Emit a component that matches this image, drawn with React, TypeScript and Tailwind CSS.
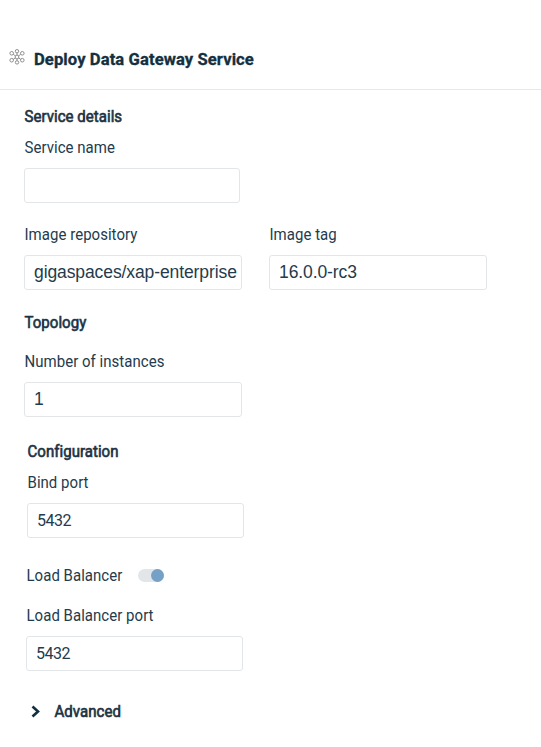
import type { ReactNode } from 'react';

const Heading = ({ children, className = '' }: { children: ReactNode; className?: string }) => (
  <h2 className={`h-5 origin-center scale-y-[1.08] pl-[0.5px] text-[15px] leading-[22px] font-normal tracking-[0.04px] whitespace-nowrap text-[#1b3344] [-webkit-text-stroke:0.6px_#1b3344] ${className}`}>
    {children}
  </h2>
);

type FieldProps = { label: string; value: string; box: string; text?: string; className?: string };

const Field = ({ label, value, box, text = '', className = '' }: FieldProps) => (
  <label className={`block ${className}`}>
    <span className="block h-5 scale-y-[1.08] pl-[0.5px] text-[15px] leading-[21px] tracking-[0.03px] whitespace-nowrap">{label}</span>
    <input
      defaultValue={value}
      className={`mt-2.5 block h-[35px] rounded-[3px] border border-[#e3e6e9] bg-white pl-[9px] outline-none ${box} ${text}`}
    />
  </label>
);

const ARIAL = "font-['Liberation_Sans',sans-serif] text-[17.5px] tracking-[-0.1px]";
const ROBOTO = 'text-[16px] tracking-[-0.5px]';

const HubIcon = () => (
  <svg width="16" height="16" viewBox="0 0 16 16" fill="none" stroke="#777777" strokeWidth="0.8">
    <circle cx="8" cy="8" r="1.9" />
    <circle cx="8" cy="2.2" r="1.7" />
    <circle cx="8" cy="13.4" r="1.7" />
    <circle cx="2.7" cy="4.3" r="1.8" />
    <circle cx="13.3" cy="4.3" r="1.8" />
    <circle cx="2.7" cy="11.2" r="1.8" />
    <circle cx="13.3" cy="11.2" r="1.8" />
    <path d="M8 3.9v2.2M8 9.9v1.8M4.3 5.3l2.1 1.6M11.7 5.3L9.6 6.9M4.3 10.3L6.4 8.9M11.7 10.3L9.6 8.9" />
  </svg>
);

export default function App() {
  return (
    <main className="h-[747px] w-[541px] overflow-hidden bg-white font-['Roboto',sans-serif] text-[#243b4d]">
      <header className="flex h-[90px] items-start border-b border-[#e6e8e9] pl-[9px] pt-[49px]">
        <HubIcon />
        <h1 className="ml-[9px] text-[16.6px] leading-[21px] font-bold tracking-[0.09px] whitespace-nowrap text-[#14303f] [-webkit-text-stroke:0.3px_#14303f]">
          Deploy Data Gateway Service
        </h1>
      </header>
      <form className="pl-6">
        <Heading className="mt-4">Service details</Heading>
        <Field className="mt-3" label="Service name" value="" box="w-[216px]" text={ROBOTO} />
        <div className="mt-[22px] flex gap-[27px]">
          <Field label="Image repository" value="gigaspaces/xap-enterprise" box="w-[218px]" text={ARIAL} />
          <Field label="Image tag" value="16.0.0-rc3" box="w-[218px]" text={ARIAL} />
        </div>
        <Heading className="mt-[22px]">Topology</Heading>
        <Field className="mt-5" label="Number of instances" value="1" box="w-[218px]" text={ARIAL} />
        <Heading className="mt-6 ml-[3px]">Configuration</Heading>
        <Field className="mt-3 ml-[3px]" label="Bind port" value="5432" box="w-[217px]" text={ROBOTO} />
        <div className="mt-7 ml-[2px] flex h-5 items-center text-[15px]">
          <span className="h-5 w-[112px] scale-y-[1.08] pl-[0.5px] leading-[21px] tracking-[0.03px]">Load Balancer</span>
          <button
            type="button"
            role="switch"
            aria-checked="true"
            aria-label="Load Balancer"
            className="-mt-0.5 flex h-[13px] w-[26px] items-center justify-end rounded-full bg-[#e2e6e9]"
          >
            <span className="size-[13px] rounded-full bg-[#75a1c7]" />
          </button>
        </div>
        <Field className="mt-5 ml-[2px]" label="Load Balancer port" value="5432" box="w-[217px]" text={ROBOTO} />
        <div className="mt-[30px] flex h-5 items-center pl-[7px]">
          <svg width="9" height="13" viewBox="0 0 9 13" fill="none" stroke="#12303f" strokeWidth="2.6">
            <path d="M1.5 1.5L7 6.5L1.5 11.5" />
          </svg>
          <Heading className="ml-[14px]">Advanced</Heading>
        </div>
      </form>
    </main>
  );
}
